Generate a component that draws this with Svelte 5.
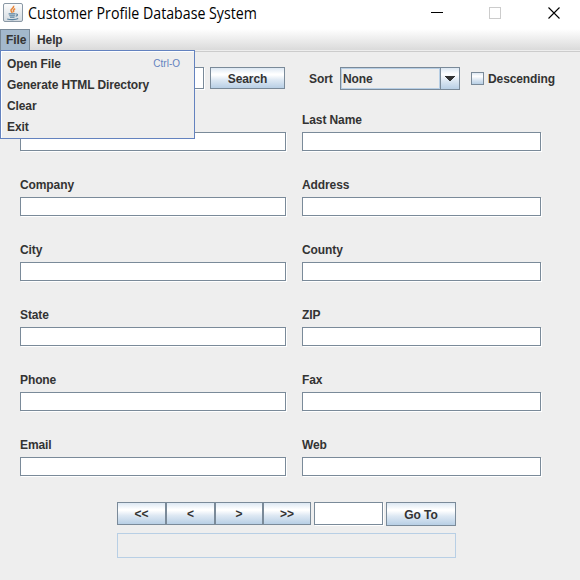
<script>
  const rows = [
    ['', 'Last Name'],
    ['Company', 'Address'],
    ['City', 'County'],
    ['State', 'ZIP'],
    ['Phone', 'Fax'],
    ['Email', 'Web']
  ];
  const items = ['Open File', 'Generate HTML Directory', 'Clear', 'Exit'];
  const nav = ['<<', '<', '>', '>>'];
</script>

<div class="window">
  <header class="titlebar">
    <svg class="logo" width="20" height="20" viewBox="0 0 20 20">
      <defs>
        <linearGradient id="tile" x1="0" y1="0" x2="0" y2="1">
          <stop offset="0" stop-color="#fdfdfd" />
          <stop offset="1" stop-color="#d3dae0" />
        </linearGradient>
      </defs>
      <rect x="0.5" y="0.5" width="19" height="18" rx="1.5" fill="url(#tile)" stroke="#8a98a5" />
      <path d="M10.600 2.800c1 2.400-3.400 3-2.600 5 .3.800 1.100 1.200 1.200 2M12.200 5.600c-2.800 1.300-1.800 2.200-1.400 3.600" fill="none" stroke="#e8863a" stroke-width="1.500" />
      <path d="M5.600 10.900h6.800M6.300 12.700h5.600M7 14.300h4.500M4.200 16c3 1 8.500.8 11-.5M12.800 11c2.400-.4 2.200 1.900-.2 2.300" fill="none" stroke="#58819f" stroke-width="1.100" />
    </svg>
    <h1>Customer Profile Database System</h1>
    <svg class="controls" width="130" height="26" viewBox="0 0 130 26" shape-rendering="crispEdges">
      <path d="M1 12.500h12" stroke="#000" />
      <rect x="59.500" y="7.500" width="11" height="11" fill="none" stroke="#ccc" />
      <path d="M118.500 7.500l11 11M129.500 7.500l-11 11" stroke="#000" stroke-width="1.100" shape-rendering="auto" />
    </svg>
  </header>

  <nav class="menubar">
    <span class="menu open">File</span>
    <span class="menu">Help</span>
    <div class="popup">
      {#each items as item, i}
        <div class="item"><span>{item}</span>{#if i === 0}<span class="key">Ctrl-O</span>{/if}</div>
      {/each}
    </div>
  </nav>

  <main>
    <div class="toolbar">
      <div class="field query"></div>
      <div class="button search">Search</div>
      <span class="sort">Sort</span>
      <div class="combo">
        <span class="value">None</span>
        <span class="arrow">
          <svg width="10" height="5" viewBox="0 0 10 5" shape-rendering="crispEdges"><path d="M0 0h10v1H0zM1 1h8v1H1zM2 2h6v1H2zM3 3h4v1H3zM4 4h2v1H4z" fill="#333" /></svg>
        </span>
      </div>
      <span class="check"></span>
      <span>Descending</span>
    </div>

    <div class="form">
      {#each rows as row}
        {#each row as label}
          <div class="cell">
            <span class="label">{label}</span>
            <div class="field"></div>
          </div>
        {/each}
      {/each}
    </div>

    <div class="footer">
      {#each nav as n, i}
        <div class="button step" class:narrow={i > 1}>{n}</div>
      {/each}
      <div class="field page"></div>
      <div class="button goto">Go To</div>
    </div>
    <div class="status"></div>
  </main>
</div>

<style>
  :global(body) {
    margin: 0;
  }
  .window {
    width: 580px;
    height: 580px;
    overflow: hidden;
    background: #eee;
    color: #333;
    font: bold 12px/14px 'Liberation Sans', Arial, sans-serif;
    letter-spacing: -0.1px;
    box-sizing: border-box;
  }
  .window :global(*) {
    box-sizing: border-box;
  }
  .titlebar {
    display: flex;
    height: 29px;
    padding-left: 3px;
    background: #fff;
  }
  .logo {
    flex: none;
    margin-top: 3px;
  }
  h1 {
    flex: none;
    width: 230px;
    margin: 2px 0 0 5px;
    color: #000;
    font: 15.5px/22px 'Open Sans', 'Noto Sans', sans-serif;
    letter-spacing: 0;
    white-space: nowrap;
    transform: scaleX(0.915);
    transform-origin: 0 0;
  }
  .controls {
    flex: none;
    margin-left: 172px;
  }
  .menubar {
    position: relative;
    display: flex;
    height: 23px;
    background: linear-gradient(#fff, #dadada 21px, #eee 21px, #eee 22px, #ccc 22px);
  }
  .menu {
    height: 21px;
    padding: 4px 0 0 7px;
  }
  .open {
    width: 30px;
    padding: 3px 0 0 5px;
    border: 1px solid #7a8a99;
    border-bottom: 0;
    background: #a3b8cc;
  }
  .popup {
    position: absolute;
    z-index: 2;
    top: 21px;
    left: 0;
    width: 195px;
    height: 89px;
    padding: 2px 14px 0 6px;
    border: 1px solid #6382bf;
    background: #eee;
    box-shadow: inset 1px 1px #fff;
  }
  .item {
    display: flex;
    justify-content: space-between;
    align-items: center;
    height: 21px;
  }
  .key {
    color: #6382bf;
    font-size: 10px;
    font-weight: normal;
    letter-spacing: 0;
  }
  .toolbar {
    display: flex;
    align-items: center;
    height: 23px;
    margin: 15px 0 0 20px;
  }
  .field {
    height: 19px;
    border: 1px solid #7a8a99;
    background: #fff;
    box-shadow: 1px 1px #fff;
  }
  .query {
    width: 184px;
    height: 22px;
    align-self: flex-start;
  }
  .button {
    display: flex;
    align-items: center;
    justify-content: center;
    border: 1px solid #7a8a99;
    background: linear-gradient(#dde8f3, #fff 30%, #fff 35%, #dde8f3 60%, #b8cfe5);
  }
  .search {
    width: 75px;
    height: 22px;
    padding-top: 2px;
    margin-left: 6px;
    align-self: flex-start;
  }
  .sort {
    width: 31px;
    margin-left: 24px;
  }
  .combo {
    display: flex;
    width: 120px;
    height: 23px;
    border: 1px solid #7a8a99;
  }
  .value {
    flex: 1;
    padding: 3px 0 0 1px;
    border: 1px solid #b8cfe5;
  }
  .arrow {
    display: flex;
    align-items: center;
    justify-content: center;
    width: 19px;
    border-left: 1px solid #7a8a99;
    background: linear-gradient(#dde8f3, #fff 30%, #dde8f3 60%, #b8cfe5);
  }
  .check {
    width: 13px;
    height: 13px;
    margin: 0 4px 0 11px;
    border: 1px solid #7a8a99;
    background: linear-gradient(#dde8f3, #fff 30%, #dde8f3 60%, #b8cfe5);
  }
  .form {
    display: grid;
    grid-template-columns: 266px 239px;
    grid-auto-rows: 65px;
    column-gap: 16px;
    margin: 23px 0 0 20px;
  }
  .label {
    display: block;
    height: 19px;
  }
  .footer {
    display: flex;
    height: 24px;
    margin: -1px 0 0 117px;
  }
  .step {
    width: 49px;
    height: 23px;
  }
  .narrow {
    width: 48px;
  }
  .page {
    width: 69px;
    height: 23px;
    margin: 0 3px;
  }
  .goto {
    width: 70px;
    height: 24px;
    padding-top: 2px;
  }
  .status {
    width: 339px;
    height: 25px;
    margin: 7px 0 0 117px;
    border: 1px solid #b8cfe5;
  }
</style>
